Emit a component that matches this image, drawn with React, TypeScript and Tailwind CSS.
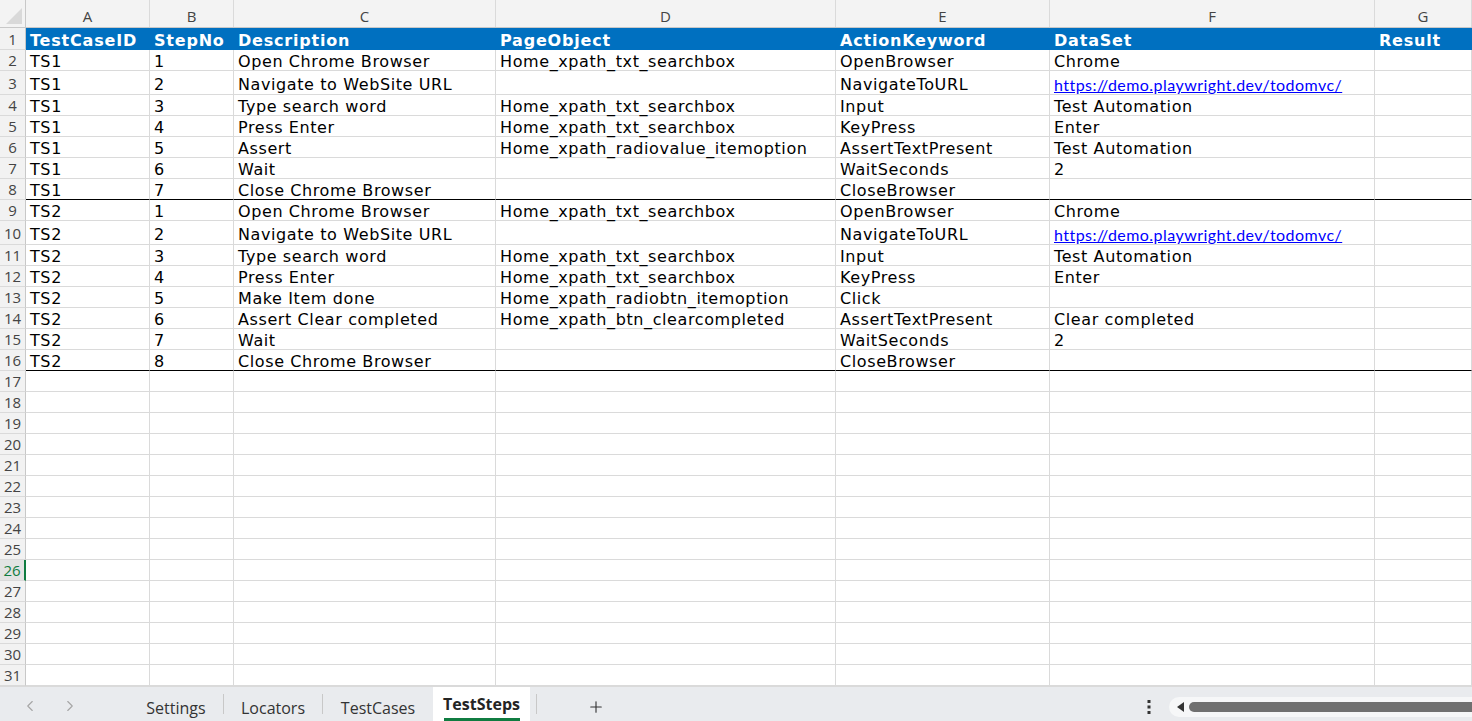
import { ChevronLeft, ChevronRight, Plus } from 'lucide-react';

const cols = [
  { key: 'A', w: 'w-[124px]' },
  { key: 'B', w: 'w-[84px]' },
  { key: 'C', w: 'w-[262px]' },
  { key: 'D', w: 'w-[340px]' },
  { key: 'E', w: 'w-[214px]' },
  { key: 'F', w: 'w-[325px]' },
  { key: 'G', w: 'flex-1' },
];

const headers = ['TestCaseID', 'StepNo', 'Description', 'PageObject', 'ActionKeyword', 'DataSet', 'Result'];

const URL = 'https://demo.playwright.dev/todomvc/';

const steps: string[][] = [
  ['TS1', '1', 'Open Chrome Browser', 'Home_xpath_txt_searchbox', 'OpenBrowser', 'Chrome'],
  ['TS1', '2', 'Navigate to WebSite URL', '', 'NavigateToURL', URL],
  ['TS1', '3', 'Type search word', 'Home_xpath_txt_searchbox', 'Input', 'Test Automation'],
  ['TS1', '4', 'Press Enter', 'Home_xpath_txt_searchbox', 'KeyPress', 'Enter'],
  ['TS1', '5', 'Assert', 'Home_xpath_radiovalue_itemoption', 'AssertTextPresent', 'Test Automation'],
  ['TS1', '6', 'Wait', '', 'WaitSeconds', '2'],
  ['TS1', '7', 'Close Chrome Browser', '', 'CloseBrowser', ''],
  ['TS2', '1', 'Open Chrome Browser', 'Home_xpath_txt_searchbox', 'OpenBrowser', 'Chrome'],
  ['TS2', '2', 'Navigate to WebSite URL', '', 'NavigateToURL', URL],
  ['TS2', '3', 'Type search word', 'Home_xpath_txt_searchbox', 'Input', 'Test Automation'],
  ['TS2', '4', 'Press Enter', 'Home_xpath_txt_searchbox', 'KeyPress', 'Enter'],
  ['TS2', '5', 'Make Item done', 'Home_xpath_radiobtn_itemoption', 'Click', ''],
  ['TS2', '6', 'Assert Clear completed', 'Home_xpath_btn_clearcompleted', 'AssertTextPresent', 'Clear completed'],
  ['TS2', '7', 'Wait', '', 'WaitSeconds', '2'],
  ['TS2', '8', 'Close Chrome Browser', '', 'CloseBrowser', ''],
];

const cellFont = "font-['DejaVu_Sans',Verdana,sans-serif] text-[16px] leading-[16px] tracking-[0.6px] text-black";
const uiFont = "font-['Open_Sans','Noto_Sans',sans-serif]";

function RowHead({ n, selected }: { n: number; selected?: boolean }) {
  return (
    <div
      className={`w-[26px] shrink-0 flex items-center justify-center pt-[1px] border-b border-[#dadada] text-[15px] ${uiFont} ${
        selected
          ? 'bg-[#e3e3e3] text-[#107c41] border-r-2 border-r-[#107c41]'
          : 'bg-[#f2f2f2] text-[#444] border-r border-r-[#c8c8c8]'
      }`}
    >
      {n}
    </div>
  );
}

function DataRow({ n, cells, thick }: { n: number; cells: string[]; thick?: boolean }) {
  const tall = cells[5] === URL;
  return (
    <div className={`flex ${tall ? 'h-[24px]' : 'h-[21px]'}`}>
      <RowHead n={n} />
      {cols.map((c, i) => {
        const v = cells[i] ?? '';
        return (
          <div
            key={c.key}
            className={`${c.w} shrink-0 flex items-center pl-1 pt-[4px] border-r border-[#dadada] whitespace-nowrap ${
              thick ? 'border-b border-b-black' : 'border-b border-b-[#dadada]'
            } ${cellFont}`}
          >
            {v === URL ? (
              <span className="font-['Lato',sans-serif] text-[16px] tracking-[0.45px] text-[#0000ff] underline">{v}</span>
            ) : (
              v
            )}
          </div>
        );
      })}
    </div>
  );
}

export default function App() {
  const empties = Array.from({ length: 15 }, (_, i) => i + 17);
  return (
    <div className="w-[1472px] h-[721px] flex flex-col bg-white overflow-hidden">
      {/* column letters */}
      <div className="flex h-[28px] bg-[#f3f3f3] border-b border-[#c8c8c8]">
        <div className="w-[26px] shrink-0 border-r border-[#c8c8c8] flex items-end justify-end p-[3px]">
          <svg width="16" height="16" viewBox="0 0 16 16">
            <polygon points="16,0 16,16 0,16" fill="#d9d9d9" />
          </svg>
        </div>
        {cols.map((c) => (
          <div
            key={c.key}
            className={`${c.w} shrink-0 flex items-center justify-center pt-[6px] border-r border-[#dadada] text-[15px] text-[#444] ${uiFont}`}
          >
            {c.key}
          </div>
        ))}
      </div>

      {/* header row */}
      <div className="flex h-[22px]">
        <RowHead n={1} />
        {cols.map((c, i) => (
          <div
            key={c.key}
            className={`${c.w} shrink-0 flex items-center pl-1 pt-[4px] bg-[#0070c0] text-white font-bold tracking-[0.8px] leading-[16px] whitespace-nowrap font-['DejaVu_Sans',Verdana,sans-serif] text-[16px]`}
          >
            {headers[i]}
          </div>
        ))}
      </div>

      {steps.map((s, i) => (
        <DataRow key={i} n={i + 2} cells={s} thick={i + 2 === 8 || i + 2 === 16} />
      ))}

      {empties.map((n) => (
        <div key={n} className="flex h-[21px]">
          <RowHead n={n} selected={n === 26} />
          {cols.map((c) => (
            <div key={c.key} className={`${c.w} shrink-0 border-r border-b border-[#dadada]`} />
          ))}
        </div>
      ))}

      {/* sheet tabs */}
      <div className={`flex-1 flex items-stretch bg-[#e9ebee] border-t border-[#dadada] ${uiFont} text-[16px] text-[#333]`}>
        <div className="w-[129px] shrink-0 flex items-center pt-[4px]">
          <ChevronLeft className="ml-[21px] text-[#a6a6a6]" size={18} strokeWidth={1.5} />
          <ChevronRight className="ml-[22px] text-[#a6a6a6]" size={18} strokeWidth={1.5} />
        </div>
        <div className="w-[94px] flex items-center justify-center pt-[7px]">Settings</div>
        <div className="w-px my-[7px] bg-[#c8c8c8]" />
        <div className="w-[98px] flex items-center justify-center pt-[7px]">Locators</div>
        <div className="w-px my-[7px] bg-[#c8c8c8]" />
        <div className="w-[110px] flex items-center justify-center pt-[7px]">TestCases</div>
        <div className="w-[97px] bg-white flex flex-col items-center justify-end">
          <span className="font-bold text-[#242424] leading-none mb-[6px]">TestSteps</span>
          <span className="w-[76px] h-[3px] bg-[#107c41]" />
        </div>
        <div className="w-px my-[7px] ml-[6px] bg-[#c8c8c8]" />
        <div className="w-[117px] flex items-center justify-center pt-[6px]">
          <Plus size={18} strokeWidth={1.5} className="text-[#333]" />
        </div>
        <div className="flex-1" />
        <div className="w-[20px] flex items-center justify-center pt-[6px] text-[#333]">
          <svg width="4" height="14" viewBox="0 0 4 14">
            <rect x="0.5" y="0" width="3" height="3" fill="#333" />
            <rect x="0.5" y="5.5" width="3" height="3" fill="#333" />
            <rect x="0.5" y="11" width="3" height="3" fill="#333" />
          </svg>
        </div>
        <div className="w-[303px] ml-[10px] flex items-center pt-[6px]">
          <div className="w-full h-[20px] bg-[#f6f7f8] rounded-l-full flex items-center pl-[8px]">
            <svg width="8" height="10" viewBox="0 0 8 10">
              <polygon points="7,0 7,10 0,5" fill="#333" />
            </svg>
            <div className="flex-1 h-[10px] ml-[4px] bg-[#707070] rounded-l-full" />
          </div>
        </div>
      </div>
    </div>
  );
}
